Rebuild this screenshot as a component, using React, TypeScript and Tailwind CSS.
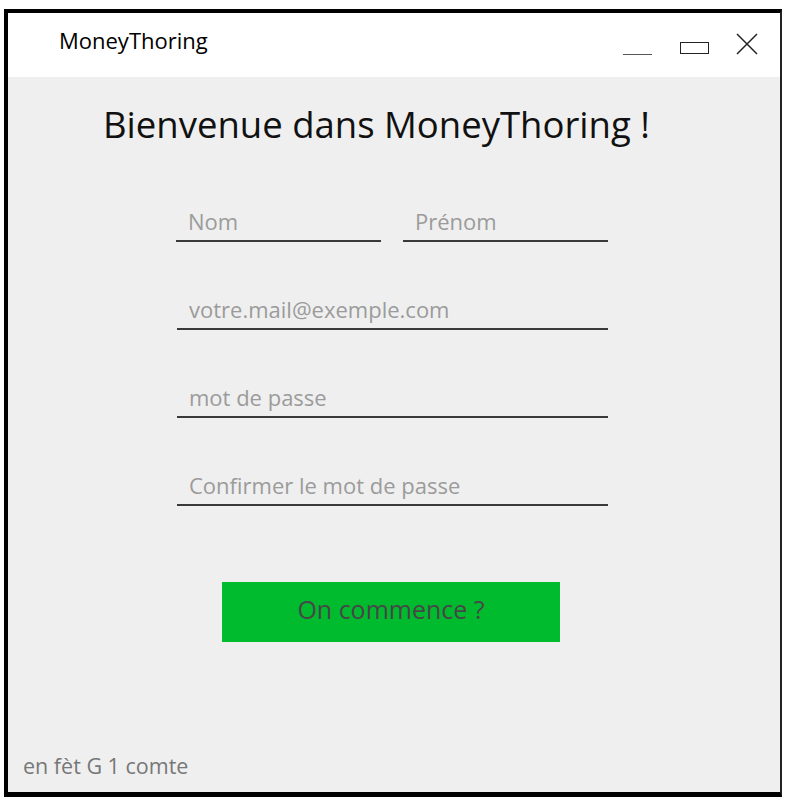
import React from 'react';

const font = { fontFamily: '"Open Sans", "Noto Sans", sans-serif' };

function Field({ placeholder, className = '' }: { placeholder: string; className?: string }) {
  return (
    <div className={`border-b-2 border-[#3a3a3a] pb-[5px] ${className}`}>
      <input
        type="text"
        placeholder={placeholder}
        className="block w-full h-[28px] pt-[2px] bg-transparent outline-none px-[12px] text-[22px] text-[#333] placeholder:text-[#9b9b9b]"
      />
    </div>
  );
}

export default function App() {
  return (
    <div className="w-[789px] h-[807px] bg-white pt-[9px] pl-[4px]" style={font}>
      <div className="w-[778px] h-[788px] flex flex-col border-l-4 border-t-4 border-b-[5px] border-r-2 border-black border-r-[#222] bg-[#efefef]">
        {/* Title bar */}
        <div className="h-[64px] bg-white flex items-start shrink-0">
          <span className="ml-[51px] mt-[16px] text-[22px] leading-none text-black">MoneyThoring</span>
          <div className="ml-auto flex items-start pr-[22px]">
            <div className="w-[29px] h-px bg-[#555] mt-[41px]" />
            <div className="ml-[28px] mt-[29px] w-[29px] h-[12px] border-[1.5px] border-[#222]" />
            <svg className="ml-[27px] mt-[20px]" width="22" height="22" viewBox="0 0 22 22">
              <path d="M1 1 L21 21 M21 1 L1 21" stroke="#222" strokeWidth="1.5" fill="none" />
            </svg>
          </div>
        </div>

        {/* Body */}
        <div className="flex-1 flex flex-col">
          <h1 className="ml-[95px] mt-[29px] text-[36.5px] leading-none text-[#111] font-normal">
            Bienvenue dans MoneyThoring !
          </h1>

          <div className="w-[431px] ml-[169px] mt-[64px] flex flex-col">
            <div className="flex gap-[22px]">
              <Field placeholder="Nom" className="w-[205px] -ml-[1px]" />
              <Field placeholder="Prénom" className="w-[205px]" />
            </div>
            <Field placeholder="votre.mail@exemple.com" className="mt-[53px]" />
            <Field placeholder="mot de passe" className="mt-[53px]" />
            <Field placeholder="Confirmer le mot de passe" className="mt-[53px]" />
          </div>

          <button className="ml-[214px] mt-[76px] w-[338px] h-[60px] pb-[5px] bg-[#00bb2d] text-[#474747] text-[25px] leading-none">
            On commence ?
          </button>

          <p className="mt-auto ml-[15px] pb-[16px] text-[21.5px] leading-none text-[#777]">en fèt G 1 comte</p>
        </div>
      </div>
    </div>
  );
}
